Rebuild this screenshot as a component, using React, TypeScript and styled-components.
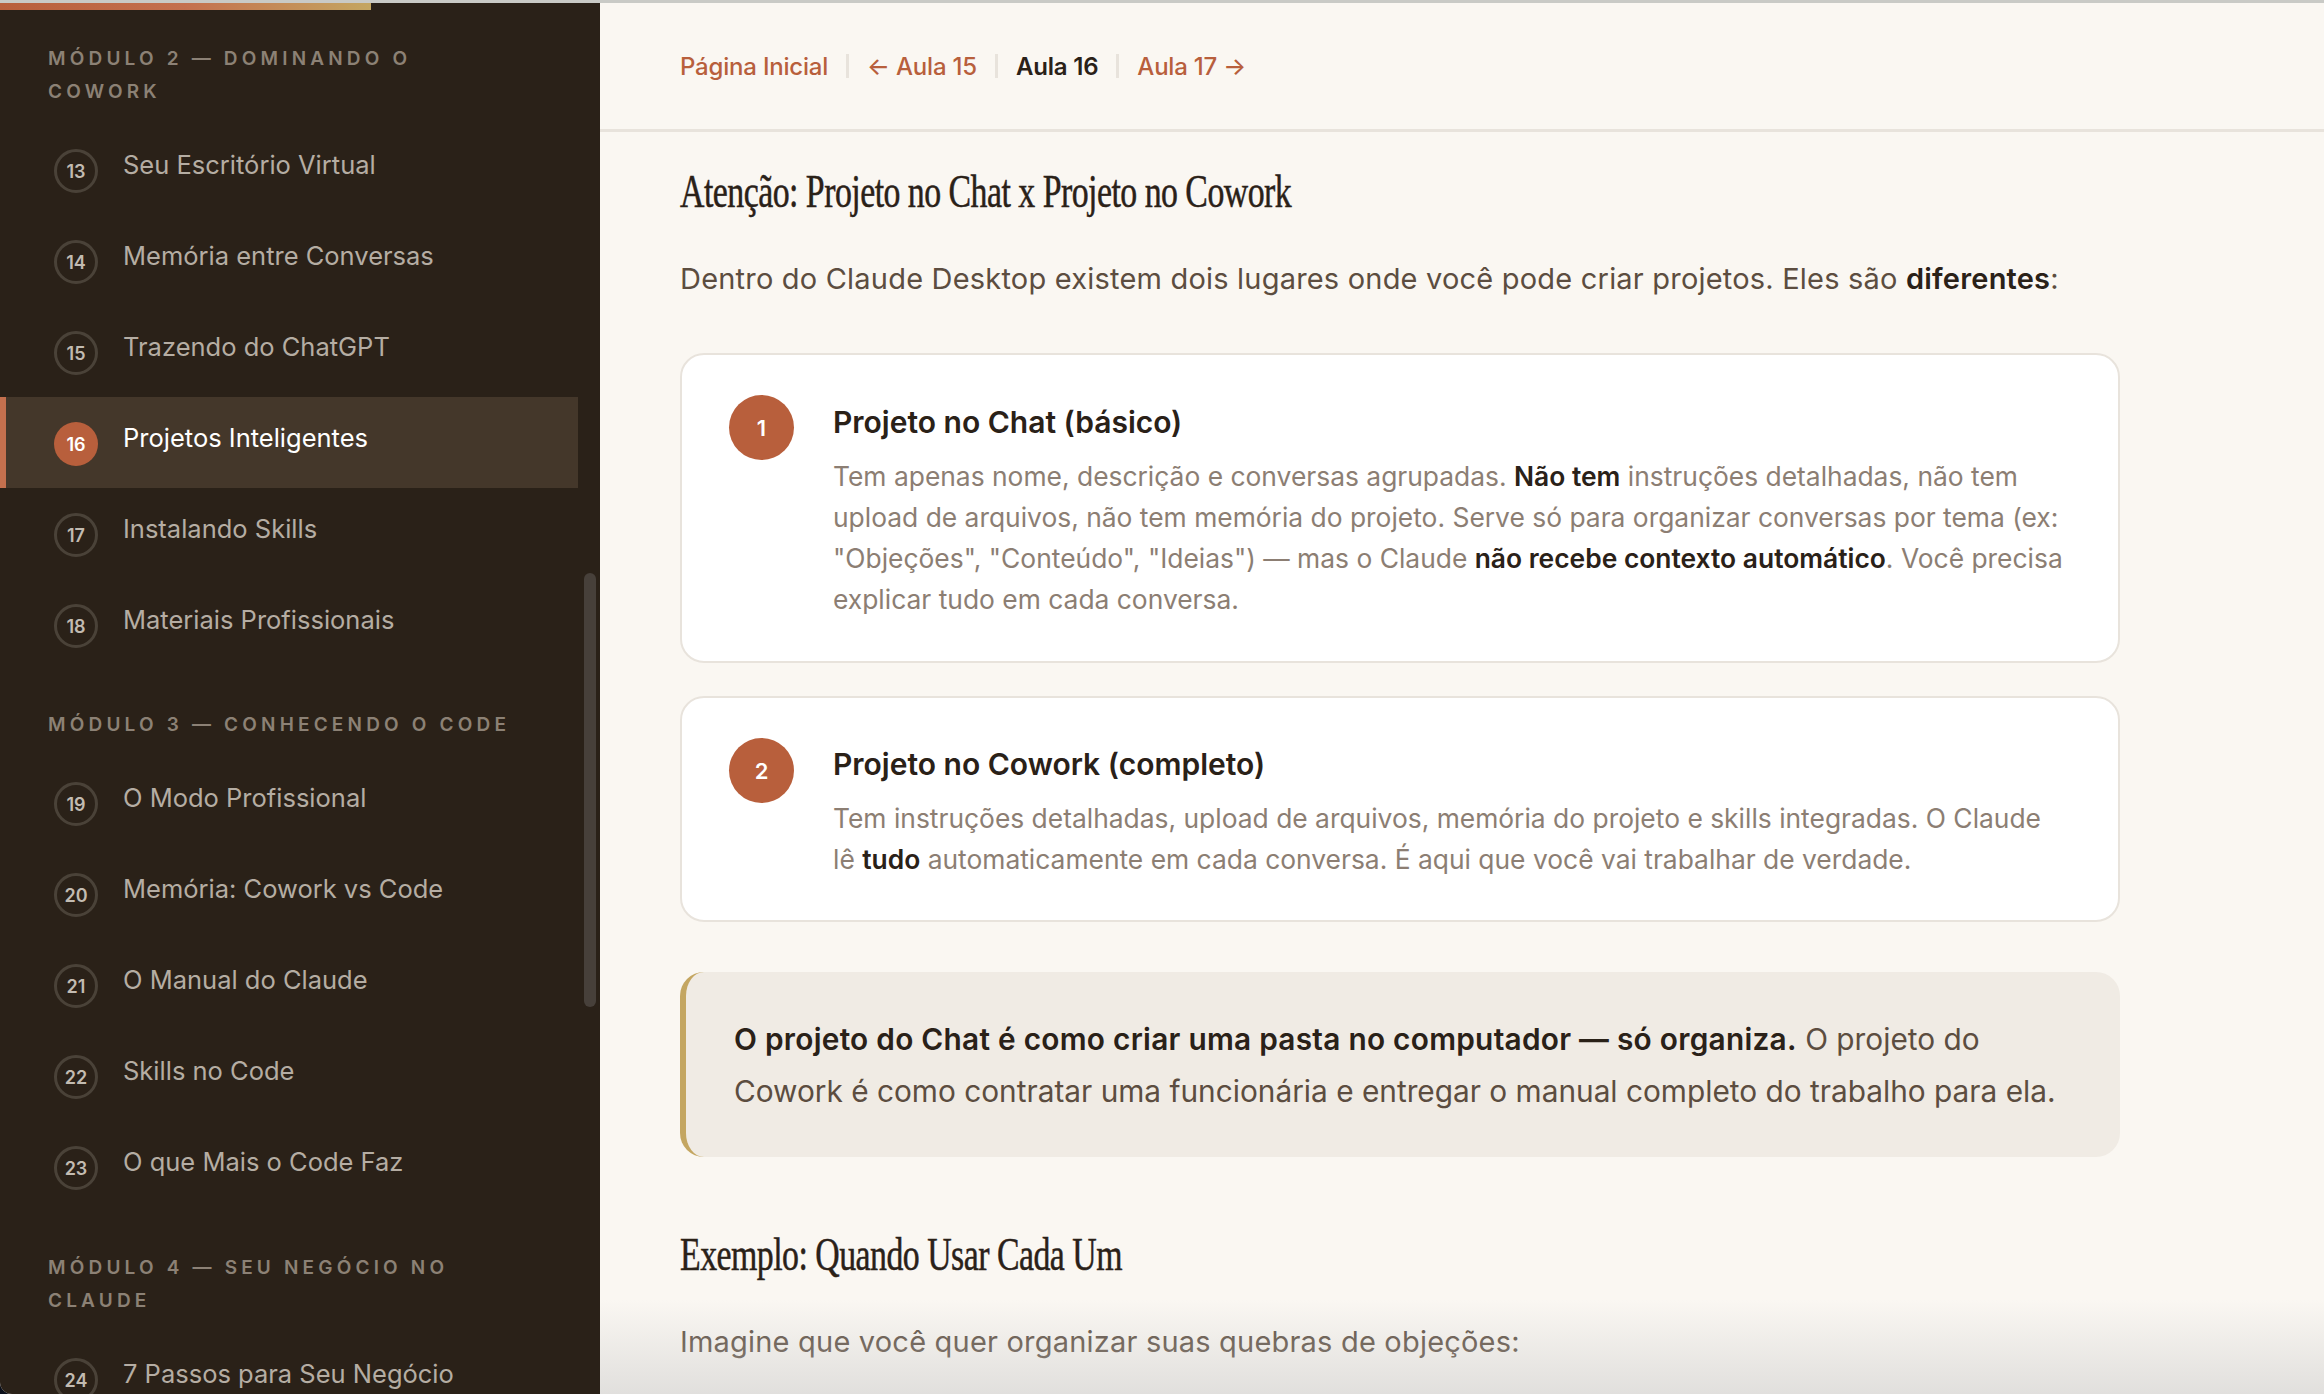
import React from 'react';
import styled, { createGlobalStyle } from 'styled-components';

const Global = createGlobalStyle`
  html, body { margin: 0; padding: 0; height: 100%; background: #0b0f1a; }
  #root { height: 100%; }
  * { box-sizing: border-box; }
`;
const sans = `Inter, "Noto Sans", sans-serif`;
const serif = `"Liberation Serif", serif`;

const Windowed = styled.div`
  position: relative;
  width: 2324px; height: 1394px;
  display: flex; flex-direction: column;
  overflow: hidden;
  border-bottom-left-radius: 12px;
  background: #faf7f2;
  font-family: ${sans};
  font-variant-ligatures: none;
`;
const TopLine = styled.div`height: 3px; flex: none; background: #c9cac6;`;
const Body = styled.div`flex: 1; display: flex; min-height: 0;`;
const Sidebar = styled.aside`
  position: relative;
  width: 600px; flex: none;
  background: #2a2118;
  overflow: hidden;
`;
const Progress = styled.div`
  height: 7px; width: 371px;
  background: linear-gradient(90deg, #b85f3c, #c4704e 50%, #c4a661);
`;
const Nav = styled.nav`padding: 32px 0 0;`;
const ModuleLabel = styled.div<{ $top: number }>`
  margin: ${p => p.$top}px 0 16px;
  padding: 0 48px;
  font-size: 19px; line-height: 33px; font-weight: 600;
  letter-spacing: 0.22em;
  color: #8c8175;
  text-transform: uppercase;
  white-space: nowrap;
`;
const Row = styled.div<{ $active?: boolean }>`
  width: 578px; height: 91px;
  display: flex; align-items: flex-start; gap: 25px;
  padding-left: ${p => (p.$active ? '48px' : '54px')};
  border-left: ${p => (p.$active ? '6px solid #c4704e' : 'none')};
  background: ${p => (p.$active ? '#44372a' : 'transparent')};
  padding-top: 25px;
`;
const Badge = styled.span<{ $active?: boolean }>`
  width: 44px; height: 44px; flex: none;
  border-radius: 50%;
  display: flex; align-items: center; justify-content: center;
  font-size: 18px; font-weight: 600;
  color: ${p => (p.$active ? '#fff' : '#c2bbb1')};
  background: ${p => (p.$active ? '#b85f3c' : 'transparent')};
  border: ${p => (p.$active ? 'none' : '3px solid #4a4238')};
`;
const Title = styled.span<{ $active?: boolean }>`
  margin-top: -2px;
  font-size: 25.5px; line-height: 36px; white-space: nowrap;
  color: ${p => (p.$active ? '#fff' : '#b5ada3')};
`;
const Thumb = styled.div`
  position: absolute; left: 584px; top: 570px;
  width: 12px; height: 434px;
  border-radius: 6px;
  background: #47403a;
`;
const Main = styled.main`flex: 1; min-width: 0; overflow: hidden;`;
const TopNav = styled.div`
  height: 129px;
  border-bottom: 3px solid #e8e3dc;
  padding: 0 80px;
  display: flex; align-items: center;
  font-size: 24px; font-weight: 500;
  letter-spacing: -0.2px;
`;
const NavLink = styled.span<{ $current?: boolean }>`
  color: ${p => (p.$current ? '#2a2118' : '#b85f3c')};
  font-weight: ${p => (p.$current ? 600 : 500)};
  white-space: nowrap;
`;
const Sep = styled.span`
  width: 3px; height: 24px; background: #e8e3dc; margin: 0 18px;
`;
const Content = styled.div`padding: 0 0 0 80px; width: 1520px;`;
const H2 = styled.h2<{ $top: number }>`
  margin: ${p => p.$top}px 0 0;
  font-family: ${serif};
  font-weight: 400;
  font-size: 46px; line-height: 60px;
  letter-spacing: -0.7px;
  color: #2a2118;
  white-space: nowrap;
  -webkit-text-stroke: 0.5px #2a2118;
  transform: scaleX(0.735);
  transform-origin: left center;
`;
const Para = styled.p<{ $top: number }>`
  margin: ${p => p.$top}px 0 0;
  font-size: 29px; line-height: 46px; letter-spacing: 0.2px;
  color: #5c4d40;
  white-space: nowrap;
  strong { color: #2a2118; font-weight: 600; }
`;
const Card = styled.div<{ $top: number; $h: number }>`
  margin-top: ${p => p.$top}px;
  height: ${p => p.$h}px;
  background: #fff;
  border: 2px solid #e8e3dc;
  border-radius: 24px;
  padding: 40px 47px;
  display: flex; gap: 39px;
`;
const Step = styled.div`
  width: 65px; height: 65px; flex: none; border-radius: 50%;
  background: #b85f3c; color: #fff;
  display: flex; align-items: center; justify-content: center;
  font-size: 22px; font-weight: 600;
`;
const StepBody = styled.div<{ $top: number }>`min-width: 0; margin-top: ${p => p.$top}px;`;
const StepTitle = styled.div`
  font-size: 30px; line-height: 40px; font-weight: 600; color: #2a2118;
`;
const StepText = styled.div`
  margin-top: 14px;
  font-size: 26.4px; line-height: 41px; color: #8c7e73; white-space: nowrap;
  strong { color: #2a2118; font-weight: 600; }
`;
const Callout = styled.div`
  margin-top: 50px;
  height: 185px;
  background: #f0ebe4;
  border-left: 6px solid #c4a661;
  border-radius: 24px;
  padding: 41px 48px;
  font-size: 29.8px; line-height: 52px; color: #5c4d40; white-space: nowrap;
  strong { color: #2a2118; font-weight: 600; letter-spacing: 0.27px; }
`;
const Fade = styled.div`
  position: absolute; left: 600px; right: 0; bottom: 0; height: 94px;
  background: linear-gradient(180deg, rgba(200,200,200,0), rgba(200,200,200,0.5));
  pointer-events: none;
`;

const mods: { top: number; label: React.ReactNode; rows: [number, string][] }[] = [
  { top: 0, label: <>Módulo 2 — Dominando o<br />Cowork</>, rows: [[13, 'Seu Escritório Virtual'], [14, 'Memória entre Conversas'], [15, 'Trazendo do ChatGPT'], [16, 'Projetos Inteligentes'], [17, 'Instalando Skills'], [18, 'Materiais Profissionais']] },
  { top: 38, label: <>Módulo 3 — Conhecendo o Code</>, rows: [[19, 'O Modo Profissional'], [20, 'Memória: Cowork vs Code'], [21, 'O Manual do Claude'], [22, 'Skills no Code'], [23, 'O que Mais o Code Faz']] },
  { top: 39, label: <>Módulo 4 — Seu Negócio no<br />Claude</>, rows: [[24, '7 Passos para Seu Negócio']] },
];

export default function App() {
  return (
    <Windowed>
      <Global />
      <TopLine />
      <Body>
        <Sidebar>
          <Progress />
          <Nav>
            {mods.map((m, i) => (
              <section key={i}>
                <ModuleLabel $top={m.top}>{m.label}</ModuleLabel>
                {m.rows.map(([n, t]) => (
                  <Row key={n} $active={n === 16}>
                    <Badge $active={n === 16}>{n}</Badge>
                    <Title $active={n === 16}>{t}</Title>
                  </Row>
                ))}
              </section>
            ))}
          </Nav>
          <Thumb />
        </Sidebar>
        <Main>
          <TopNav>
            <NavLink>Página Inicial</NavLink><Sep />
            <NavLink>← Aula 15</NavLink><Sep />
            <NavLink $current>Aula 16</NavLink><Sep />
            <NavLink>Aula 17 →</NavLink>
          </TopNav>
          <Content>
            <H2 $top={30}>Atenção: Projeto no Chat x Projeto no Cowork</H2>
            <Para $top={34}>Dentro do Claude Desktop existem dois lugares onde você pode criar projetos. Eles são <strong>diferentes</strong>:</Para>
            <Card $top={51} $h={310}>
              <Step>1</Step>
              <StepBody $top={7}>
                <StepTitle>Projeto no Chat (básico)</StepTitle>
                <StepText>
                  Tem apenas nome, descrição e conversas agrupadas. <strong>Não tem</strong> instruções detalhadas, não tem<br />
                  upload de arquivos, não tem memória do projeto. Serve só para organizar conversas por tema (ex:<br />
                  "Objeções", "Conteúdo", "Ideias") — mas o Claude <strong>não recebe contexto automático</strong>. Você precisa<br />
                  explicar tudo em cada conversa.
                </StepText>
              </StepBody>
            </Card>
            <Card $top={33} $h={226}>
              <Step>2</Step>
              <StepBody $top={6}>
                <StepTitle>Projeto no Cowork (completo)</StepTitle>
                <StepText>
                  Tem instruções detalhadas, upload de arquivos, memória do projeto e skills integradas. O Claude<br />
                  lê <strong>tudo</strong> automaticamente em cada conversa. É aqui que você vai trabalhar de verdade.
                </StepText>
              </StepBody>
            </Card>
            <Callout>
              <strong>O projeto do Chat é como criar uma pasta no computador — só organiza.</strong> O projeto do<br />
              Cowork é como contratar uma funcionária e entregar o manual completo do trabalho para ela.
            </Callout>
            <H2 $top={68}>Exemplo: Quando Usar Cada Um</H2>
            <Para $top={34}>Imagine que você quer organizar suas quebras de objeções:</Para>
          </Content>
        </Main>
      </Body>
      <Fade />
    </Windowed>
  );
}
